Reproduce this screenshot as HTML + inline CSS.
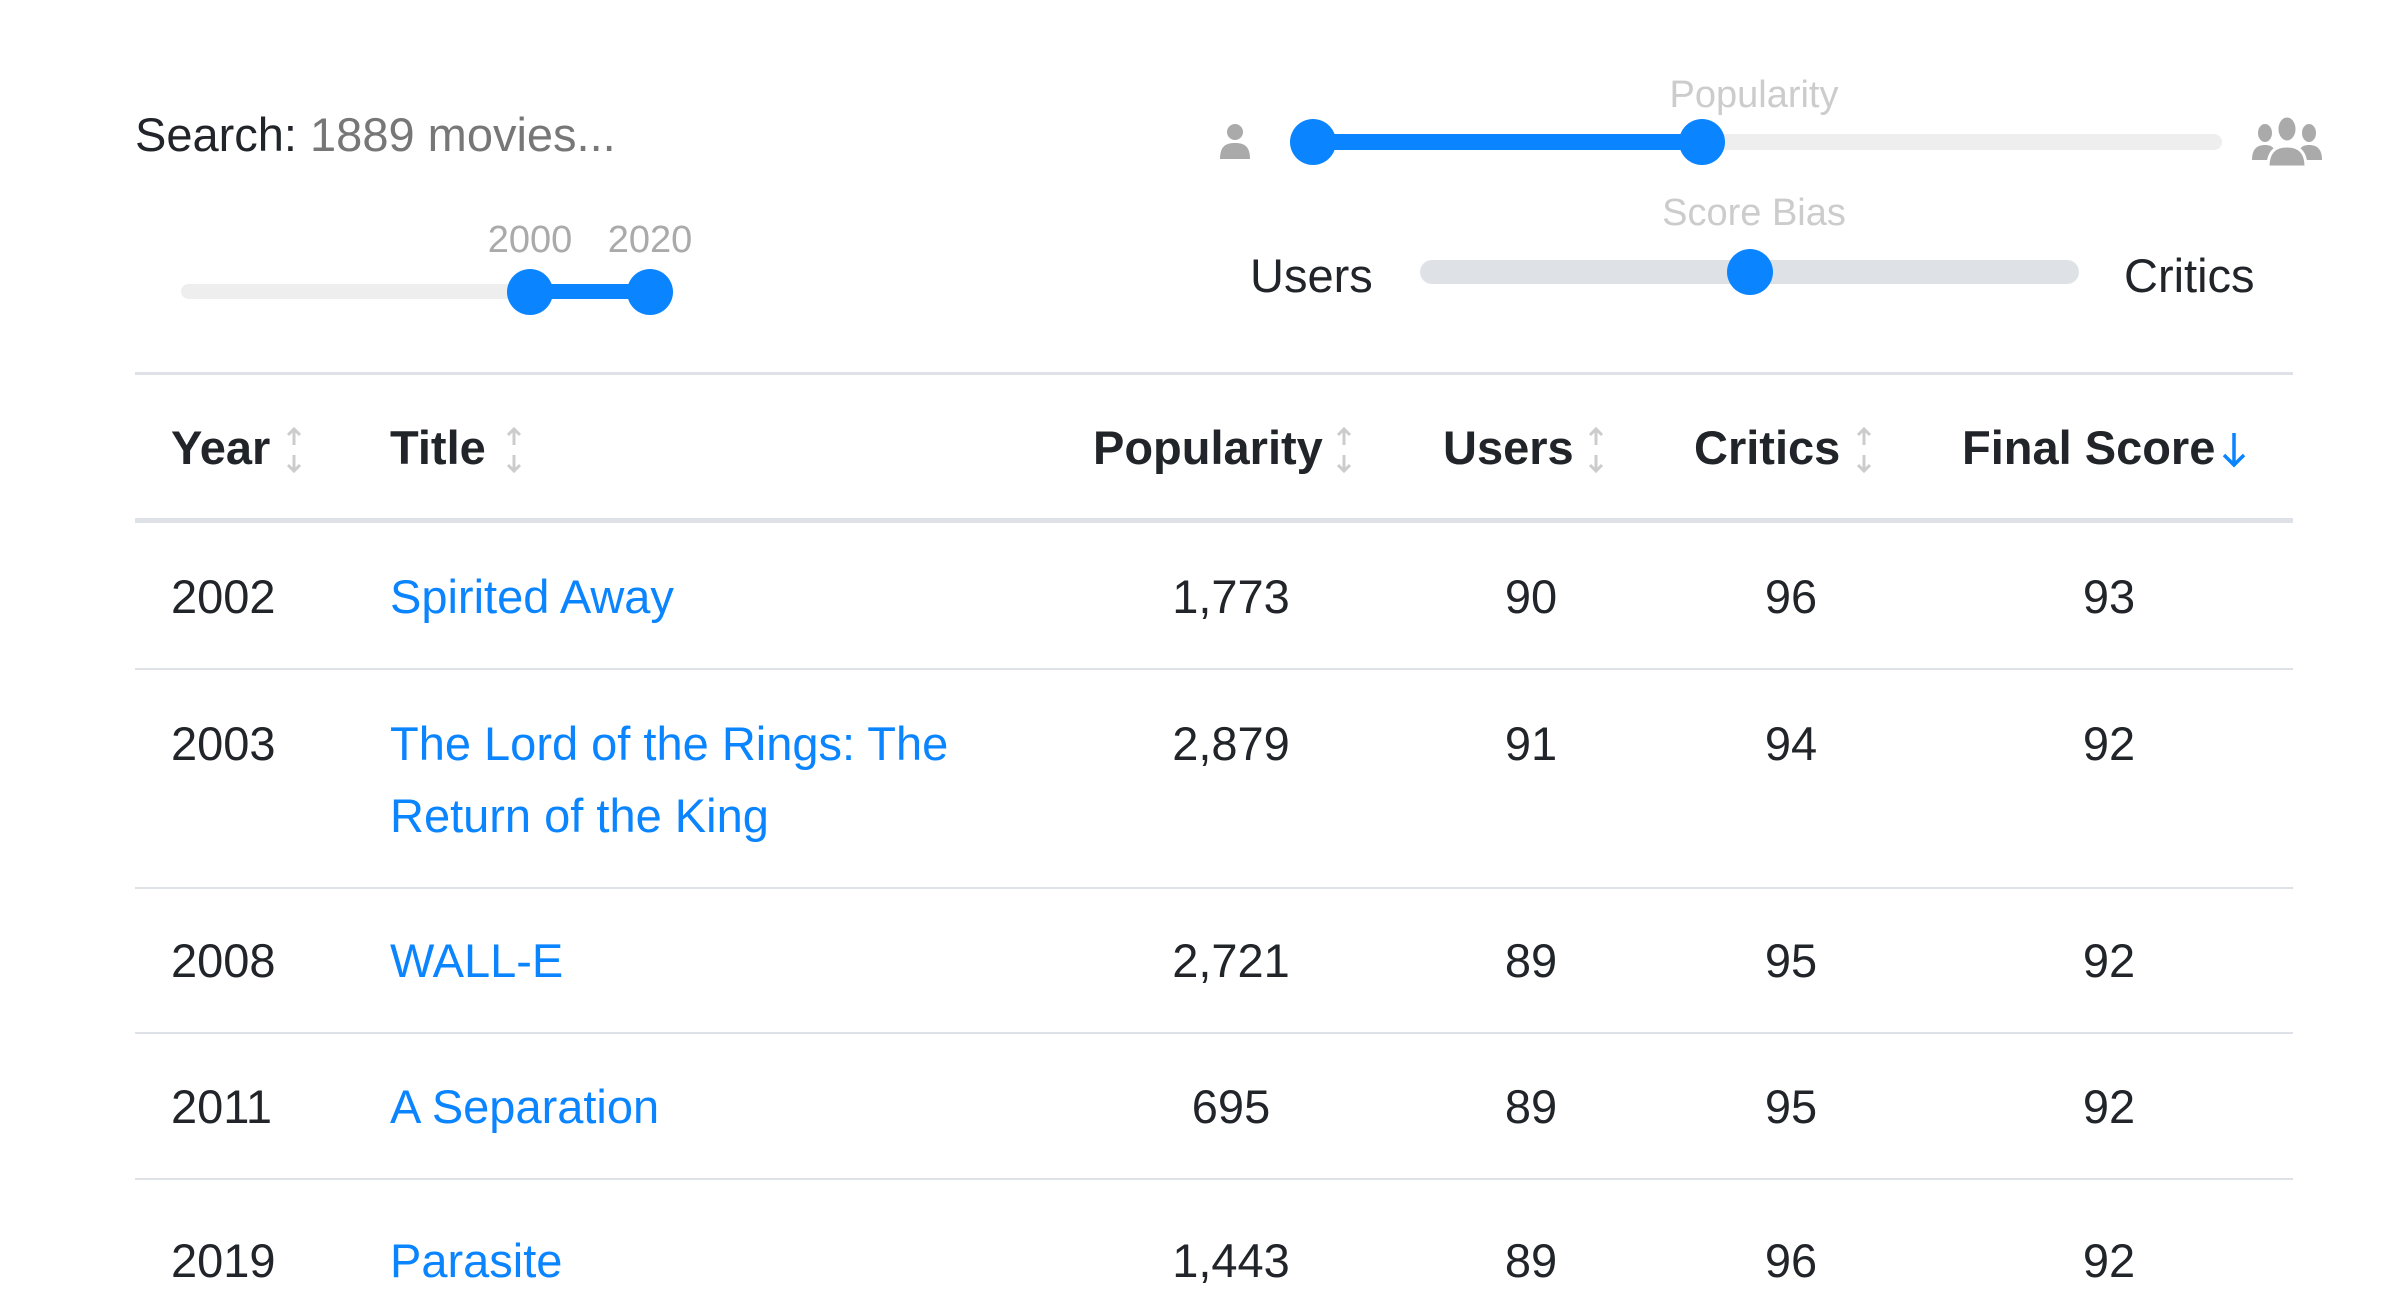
<!DOCTYPE html>
<html><head><meta charset="utf-8"><style>
*{margin:0;padding:0;box-sizing:border-box}
body{width:2400px;height:1256px;overflow:hidden;background:#fff;font-family:"Liberation Sans",sans-serif;color:#212529;position:relative}
.t{position:absolute;font-size:47px;line-height:72px;height:72px;white-space:nowrap}
.c{transform:translateX(-50%)}
.b{font-weight:bold}
.a{color:#0a84ff}
.lbl{position:absolute;font-size:38px;line-height:44px;white-space:nowrap;transform:translateX(-50%)}
.line{position:absolute;left:135px;width:2158px;height:3px;background:#dee2e6}
.thumb{position:absolute;width:46px;height:46px;border-radius:50%;background:#0a84ff;transform:translate(-50%,-50%)}
.track{position:absolute;border-radius:10px}
.sort{position:absolute;width:18px;height:46px}
</style></head><body>
<div class="t" style="left:135px;top:99px">Search: <span style="color:#777">1889 movies...</span></div>

<div class="lbl" style="left:530px;top:218px;color:#aaa">2000</div>
<div class="lbl" style="left:650px;top:218px;color:#aaa">2020</div>
<div class="track" style="left:181px;top:284px;width:492px;height:15px;background:#eee"></div>
<div class="track" style="left:530px;top:284px;width:120px;height:15px;background:#0a84ff;border-radius:0"></div>
<div class="thumb" style="left:530px;top:292px"></div>
<div class="thumb" style="left:650px;top:292px"></div>

<div class="lbl" style="left:1754px;top:73px;color:#ccc">Popularity</div>
<svg style="position:absolute;left:1218px;top:120px" width="34" height="40" viewBox="0 0 34 40"><circle cx="17" cy="12" r="8" fill="#aaa"/><path d="M2 39 C2 26 8 23 17 23 C26 23 32 26 32 39Z" fill="#aaa"/></svg>
<div class="track" style="left:1313px;top:134px;width:909px;height:16px;background:#eee"></div>
<div class="track" style="left:1313px;top:134px;width:389px;height:16px;background:#0a84ff;border-radius:0"></div>
<div class="thumb" style="left:1313px;top:142px"></div>
<div class="thumb" style="left:1702px;top:142px"></div>
<svg style="position:absolute;left:2252px;top:115px" width="70" height="52" viewBox="0 0 70 52"><g fill="#aaa"><ellipse cx="13" cy="18" rx="7" ry="9"/><path d="M0 45 C0 34 5 30 13 30 C21 30 24 34 24 45Z"/><ellipse cx="57" cy="18" rx="7" ry="9"/><path d="M46 45 C46 34 49 30 57 30 C65 30 70 34 70 45Z"/><g stroke="#fff" stroke-width="3"><ellipse cx="35" cy="14" rx="10" ry="13"/><path d="M16 52 C16 36 24 31 35 31 C46 31 54 36 54 52Z"/></g></g></svg>

<div class="lbl" style="left:1754px;top:191px;color:#ccc">Score Bias</div>
<div class="t" style="left:1250px;top:240px;width:120px;text-align:right">Users</div>
<div class="track" style="left:1420px;top:260px;width:659px;height:24px;background:#dee2e6;border-radius:12px"></div>
<div class="thumb" style="left:1750px;top:272px"></div>
<div class="t" style="left:2124px;top:240px">Critics</div>

<div class="line" style="top:372px"></div>
<div class="t b" style="left:171px;top:412px">Year</div>
<div class="t b" style="left:390px;top:412px">Title</div>
<div class="t b" style="left:1093px;top:412px">Popularity</div>
<div class="t b" style="left:1443px;top:412px">Users</div>
<div class="t b" style="left:1694px;top:412px">Critics</div>
<div class="t b" style="left:1962px;top:412px">Final Score</div>
<svg width="0" height="0" style="position:absolute"><defs><g id="s" fill="none" stroke="#ccc" stroke-width="3"><path d="M9 2V18M3 8L9 2L15 8"/><path d="M9 28V44M3 38L9 44L15 38"/></g></defs></svg>
<svg class="sort" style="left:285px;top:427px" viewBox="0 0 18 46"><use href="#s"/></svg>
<svg class="sort" style="left:505px;top:427px" viewBox="0 0 18 46"><use href="#s"/></svg>
<svg class="sort" style="left:1335px;top:427px" viewBox="0 0 18 46"><use href="#s"/></svg>
<svg class="sort" style="left:1587px;top:427px" viewBox="0 0 18 46"><use href="#s"/></svg>
<svg class="sort" style="left:1855px;top:427px" viewBox="0 0 18 46"><use href="#s"/></svg>
<svg style="position:absolute;left:2222px;top:432px" width="24" height="36" viewBox="0 0 24 36"><path d="M12 1V33M2 23L12 33L22 23" fill="none" stroke="#0a84ff" stroke-width="3.5"/></svg>
<div class="line" style="top:518px;height:5px"></div>

<div class="t" style="left:171px;top:561px">2002</div>
<div class="t a" style="left:390px;top:561px">Spirited Away</div>
<div class="t c" style="left:1231px;top:561px">1,773</div>
<div class="t c" style="left:1531px;top:561px">90</div>
<div class="t c" style="left:1791px;top:561px">96</div>
<div class="t c" style="left:2109px;top:561px">93</div>
<div class="line" style="top:668px;height:2px"></div>
<div class="t" style="left:171px;top:708px">2003</div>
<div class="t a" style="left:390px;top:708px">The Lord of the Rings: The</div>
<div class="t a" style="left:390px;top:780px">Return of the King</div>
<div class="t c" style="left:1231px;top:708px">2,879</div>
<div class="t c" style="left:1531px;top:708px">91</div>
<div class="t c" style="left:1791px;top:708px">94</div>
<div class="t c" style="left:2109px;top:708px">92</div>
<div class="line" style="top:887px;height:2px"></div>
<div class="t" style="left:171px;top:925px">2008</div>
<div class="t a" style="left:390px;top:925px">WALL-E</div>
<div class="t c" style="left:1231px;top:925px">2,721</div>
<div class="t c" style="left:1531px;top:925px">89</div>
<div class="t c" style="left:1791px;top:925px">95</div>
<div class="t c" style="left:2109px;top:925px">92</div>
<div class="line" style="top:1032px;height:2px"></div>
<div class="t" style="left:171px;top:1071px">2011</div>
<div class="t a" style="left:390px;top:1071px">A Separation</div>
<div class="t c" style="left:1231px;top:1071px">695</div>
<div class="t c" style="left:1531px;top:1071px">89</div>
<div class="t c" style="left:1791px;top:1071px">95</div>
<div class="t c" style="left:2109px;top:1071px">92</div>
<div class="line" style="top:1178px;height:2px"></div>
<div class="t" style="left:171px;top:1225px">2019</div>
<div class="t a" style="left:390px;top:1225px">Parasite</div>
<div class="t c" style="left:1231px;top:1225px">1,443</div>
<div class="t c" style="left:1531px;top:1225px">89</div>
<div class="t c" style="left:1791px;top:1225px">96</div>
<div class="t c" style="left:2109px;top:1225px">92</div>
</body></html>
